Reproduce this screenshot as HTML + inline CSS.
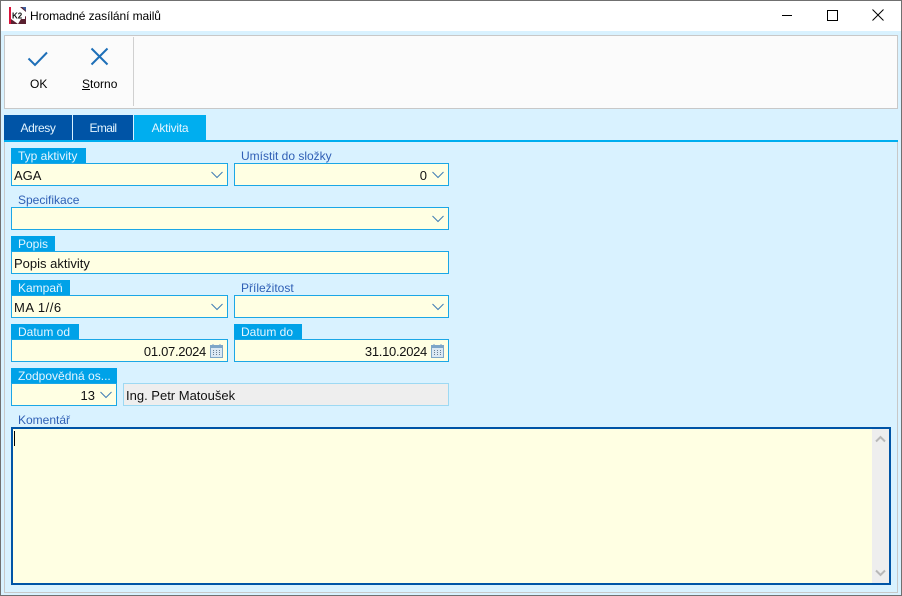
<!DOCTYPE html>
<html><head><meta charset="utf-8">
<style>
html,body{margin:0;padding:0;width:902px;height:596px;overflow:hidden;background:#d9f2ff}
*{box-sizing:border-box}
body{font-family:"Liberation Sans",sans-serif;font-size:12px;color:#000;position:relative}
.a{position:absolute}
.t{position:absolute;white-space:nowrap;line-height:15px}
.lab{position:absolute;height:15px;background:#00a2e8;color:#e4f5ff;line-height:17px;padding-left:7px;white-space:nowrap;overflow:hidden}
.cap{position:absolute;color:#2f5fb5;line-height:15px;white-space:nowrap}
.inp{position:absolute;height:23px;background:#ffffe3;border:1px solid #1ba7e6;line-height:23px;white-space:nowrap;font-size:13px}
.inp span.l{position:absolute;left:2px;top:0;color:#111}
.inp span.r{position:absolute;top:0;color:#111}
.inp svg{position:absolute}
.tab{position:absolute;top:115px;height:25px;background:#0054a6;color:#e4f5ff;text-align:center;line-height:27px;letter-spacing:-.25px}
</style></head><body>
<div class="a" style="left:0;top:0;width:902px;height:31px;background:#fff"></div>
<div class="a" style="left:0;top:0;width:902px;height:1px;background:#707070"></div>
<div class="a" style="left:0;top:0;width:1px;height:596px;background:#707070"></div>
<div class="a" style="left:901px;top:0;width:1px;height:596px;background:#707070"></div>
<div class="a" style="left:0;top:595px;width:902px;height:1px;background:#707070"></div>

<svg class="a" style="left:9px;top:7px" width="17" height="17" viewBox="0 0 17 17">
<rect width="17" height="17" fill="#fff"/><rect x="0" y="0" width="2" height="17" fill="#d8143a"/>
<path d="M11 0L17 0L17 5ZM2 12L9 17L2 17ZM12 12L17 9L17 17L9 17Z" fill="#5a2030"/><path d="M13 0L17 0L17 4Z" fill="#3a5fa0"/>
<rect x="3" y="5" width="13" height="7" fill="#fff"/>
<text x="3" y="11.500" font-family="Liberation Sans" font-size="8" font-weight="bold" fill="#111">K2</text>
</svg>
<div class="t" style="left:30px;top:9px;letter-spacing:-.08px">Hromadné zasílání mailů</div>

<div class="a" style="left:782px;top:15px;width:10px;height:1px;background:#000"></div>
<div class="a" style="left:827px;top:10px;width:11px;height:11px;border:1px solid #000"></div>
<svg class="a" style="left:872px;top:9px" width="12" height="12" viewBox="0 0 12 12"><path d="M.5.500L11.500 11.500M11.500.500L.5 11.500" stroke="#000" stroke-width="1" fill="none"/></svg>

<div class="a" style="left:4px;top:35px;width:894px;height:74px;background:#fbfbfb;border:1px solid #c8c8c8"></div>
<div class="a" style="left:133px;top:37px;width:1px;height:69px;background:#d0d0d0"></div>
<svg class="a" style="left:27px;top:50px" width="22" height="17" viewBox="0 0 22 17"><path d="M1.500 8.500L8 15L20 2.500" stroke="#1e6fb8" stroke-width="2" fill="none"/></svg>
<svg class="a" style="left:90px;top:47px" width="19" height="19" viewBox="0 0 19 19"><path d="M1.500 1.500L17.500 17.500M17.500 1.500L1.500 17.500" stroke="#1e6fb8" stroke-width="2" fill="none"/></svg>
<div class="t" style="left:30px;top:77px">OK</div>
<div class="t" style="left:82px;top:77px"><u>S</u>torno</div>

<div class="tab" style="left:4px;width:68px;letter-spacing:-.4px">Adresy</div>
<div class="tab" style="left:73px;width:60px;letter-spacing:-.6px">Email</div>
<div class="tab" style="left:134px;width:72px;background:#00aeef">Aktivita</div>
<div class="a" style="left:4px;top:140px;width:894px;height:2px;background:#00aeef"></div>
<div class="a" style="left:4px;top:142px;width:1px;height:451px;background:#c8c8c8"></div>
<div class="a" style="left:897px;top:142px;width:1px;height:451px;background:#c8c8c8"></div>
<div class="a" style="left:4px;top:592px;width:894px;height:1px;background:#c8c8c8"></div>

<div class="lab" style="left:11px;top:148px;width:75px">Typ aktivity</div>
<div class="inp" style="left:11px;top:163px;width:217px"><span class="l">AGA</span><svg style="right:4px;top:7px" width="12" height="8"><path d="M.5 1L6 6.500L11.500 1" stroke="#3f7cb5" fill="none"/></svg></div>
<div class="cap" style="left:241px;top:149px">Umístit do složky</div>
<div class="inp" style="left:234px;top:163px;width:215px"><span class="r" style="right:21px">0</span><svg style="right:4px;top:7px" width="12" height="8"><path d="M.5 1L6 6.500L11.500 1" stroke="#3f7cb5" fill="none"/></svg></div>

<div class="cap" style="left:18px;top:193px">Specifikace</div>
<div class="inp" style="left:11px;top:207px;width:438px"><svg style="right:4px;top:7px" width="12" height="8"><path d="M.5 1L6 6.500L11.500 1" stroke="#3f7cb5" fill="none"/></svg></div>

<div class="lab" style="left:11px;top:236px;width:44px">Popis</div>
<div class="inp" style="left:11px;top:251px;width:438px"><span class="l">Popis aktivity</span></div>

<div class="lab" style="left:11px;top:280px;width:59px">Kampaň</div>
<div class="inp" style="left:11px;top:295px;width:217px"><span class="l" style="letter-spacing:.5px">MA 1//6</span><svg style="right:4px;top:7px" width="12" height="8"><path d="M.5 1L6 6.500L11.500 1" stroke="#3f7cb5" fill="none"/></svg></div>
<div class="cap" style="left:241px;top:281px">Příležitost</div>
<div class="inp" style="left:234px;top:295px;width:215px"><svg style="right:4px;top:7px" width="12" height="8"><path d="M.5 1L6 6.500L11.500 1" stroke="#3f7cb5" fill="none"/></svg></div>

<div class="lab" style="left:11px;top:324px;width:68px">Datum od</div>
<div class="inp" style="left:11px;top:339px;width:217px"><span class="r" style="right:21px;letter-spacing:-.3px">01.07.2024</span>
<svg style="right:4px;top:4px" width="13" height="14" viewBox="0 0 13 14"><rect x=".5" y="1.500" width="12" height="12" fill="#dbe8f3" stroke="#7ea6c8"/><rect x="1" y="2" width="11" height="2" fill="#7ea6c8"/><path d="M3 0v2M10 0v2" stroke="#7ea6c8"/><path d="M3 6.500h1M6 6.500h1M9 6.500h1M3 8.500h1M6 8.500h1M9 8.500h1M3 10.500h1M6 10.500h1M9 10.500h1" stroke="#6b7f93"/></svg></div>
<div class="lab" style="left:234px;top:324px;width:68px">Datum do</div>
<div class="inp" style="left:234px;top:339px;width:215px"><span class="r" style="right:21px;letter-spacing:-.3px">31.10.2024</span>
<svg style="right:4px;top:4px" width="13" height="14" viewBox="0 0 13 14"><rect x=".5" y="1.500" width="12" height="12" fill="#dbe8f3" stroke="#7ea6c8"/><rect x="1" y="2" width="11" height="2" fill="#7ea6c8"/><path d="M3 0v2M10 0v2" stroke="#7ea6c8"/><path d="M3 6.500h1M6 6.500h1M9 6.500h1M3 8.500h1M6 8.500h1M9 8.500h1M3 10.500h1M6 10.500h1M9 10.500h1" stroke="#6b7f93"/></svg></div>

<div class="lab" style="left:11px;top:368px;width:106px">Zodpovědná os...</div>
<div class="inp" style="left:11px;top:383px;width:106px"><span class="r" style="right:21px">13</span><svg style="right:4px;top:7px" width="12" height="8"><path d="M.5 1L6 6.500L11.500 1" stroke="#3f7cb5" fill="none"/></svg></div>
<div class="inp" style="left:123px;top:383px;width:326px;background:#eeeeee;border-color:#9dd9f3"><span class="l">Ing. Petr Matoušek</span></div>

<div class="cap" style="left:18px;top:413px">Komentář</div>
<div class="a" style="left:11px;top:427px;width:880px;height:158px;background:#ffffe3;border:2px solid #0054a6"></div>
<div class="a" style="left:14px;top:431px;width:1px;height:15px;background:#000"></div>
<div class="a" style="left:872px;top:429px;width:17px;height:154px;background:#eeeeee"></div>
<svg class="a" style="left:875px;top:435px" width="11" height="8"><path d="M1 6.500L5.500 2L10 6.500" stroke="#b8b8b8" stroke-width="2" fill="none"/></svg>
<svg class="a" style="left:875px;top:569px" width="11" height="8"><path d="M1 1.500L5.500 6L10 1.500" stroke="#b8b8b8" stroke-width="2" fill="none"/></svg>
</body></html>
